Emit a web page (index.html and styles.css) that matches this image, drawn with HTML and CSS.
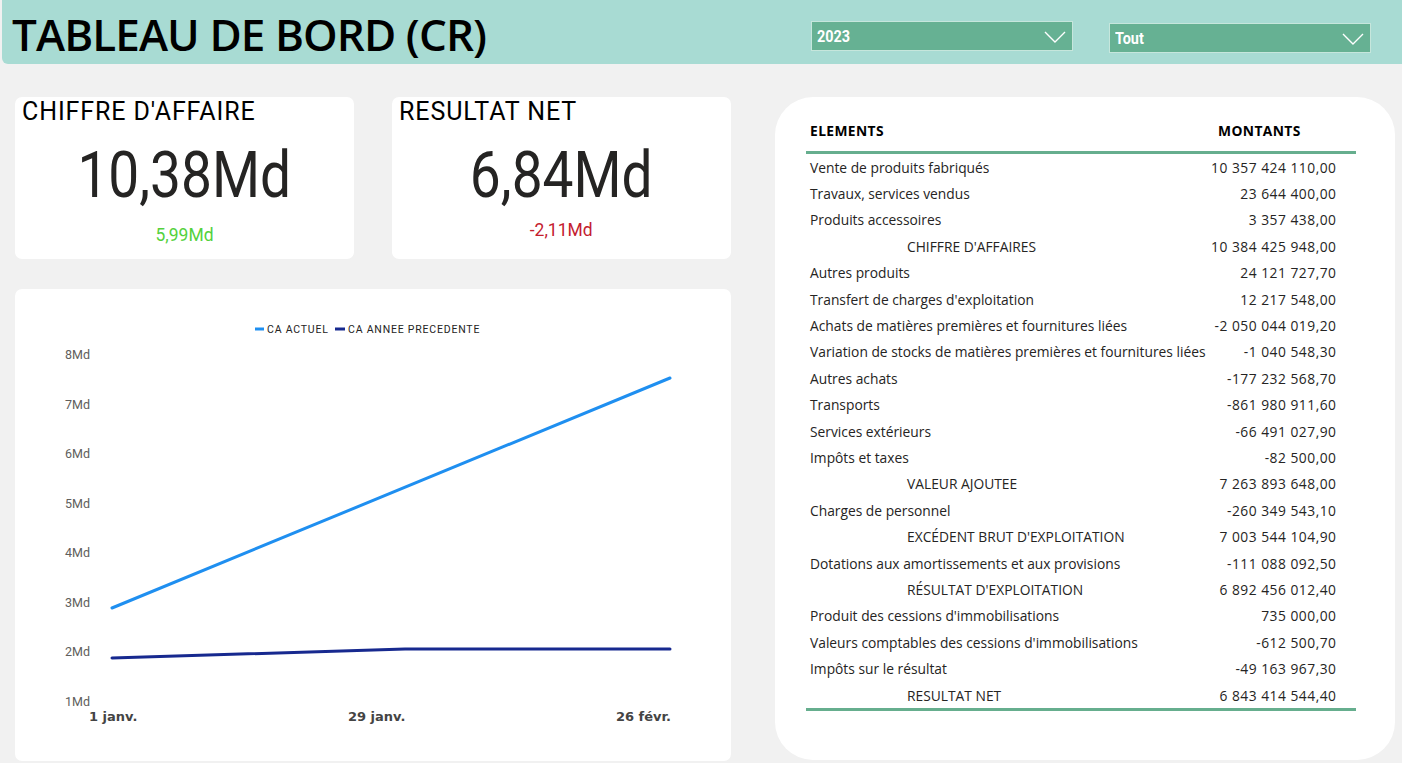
FILE: index.html
```html
<!DOCTYPE html>
<html lang="fr">
<head>
<meta charset="utf-8">
<title>Tableau de bord (CR)</title>
<link rel="stylesheet" href="styles.css">
</head>
<body>
<header class="topbar">
  <h1 class="title">TABLEAU DE BORD (CR)</h1>
  <div class="slicer slicer-year">
    <span class="slicer-label">2023</span>
    <svg class="chev" width="22" height="12" viewBox="0 0 22 12"><path d="M1 1 L11 11 L21 1" fill="none" stroke="#fff" stroke-width="1.4"/></svg>
  </div>
  <div class="slicer slicer-all">
    <span class="slicer-label">Tout</span>
    <svg class="chev" width="22" height="12" viewBox="0 0 22 12"><path d="M1 1 L11 11 L21 1" fill="none" stroke="#fff" stroke-width="1.4"/></svg>
  </div>
</header>

<main class="content">
  <section class="left">
    <div class="kpis">
      <div class="kpi">
        <div class="kpi-title">CHIFFRE D'AFFAIRE</div>
        <div class="kpi-value"><span class="num">10,38Md</span></div>
        <div class="kpi-delta up"><span class="num">5,99Md</span></div>
      </div>
      <div class="kpi">
        <div class="kpi-title">RESULTAT NET</div>
        <div class="kpi-value"><span class="num">6,84Md</span></div>
        <div class="kpi-delta down"><span class="num">-2,11Md</span></div>
      </div>
    </div>

    <div class="chart-card">
      <svg class="chart" width="716" height="472" viewBox="0 0 716 472">
        <g class="legend">
          <line x1="240" y1="40" x2="249" y2="40" stroke="#1f8ff0" stroke-width="3"/>
          <text x="252" y="44">CA ACTUEL</text>
          <line x1="320" y1="40" x2="330" y2="40" stroke="#17298f" stroke-width="3"/>
          <text x="333" y="44">CA ANNEE PRECEDENTE</text>
        </g>
        <g class="yaxis">
          <text x="50" y="70">8Md</text>
          <text x="50" y="120">7Md</text>
          <text x="50" y="169">6Md</text>
          <text x="50" y="219">5Md</text>
          <text x="50" y="268">4Md</text>
          <text x="50" y="318">3Md</text>
          <text x="50" y="367">2Md</text>
          <text x="50" y="417">1Md</text>
        </g>
        <g class="xaxis">
          <text x="74" y="432">1 janv.</text>
          <text x="333" y="432">29 janv.</text>
          <text x="656" y="432" text-anchor="end">26 févr.</text>
        </g>
        <polyline points="97,319 655,89" fill="none" stroke="#1f8ff0" stroke-width="3" stroke-linecap="round"/>
        <polyline points="97,369 390,360 655,360" fill="none" stroke="#17298f" stroke-width="3" stroke-linecap="round" stroke-linejoin="round"/>
      </svg>
    </div>
  </section>

  <section class="table-card">
    <div class="grid">
      <div class="row head"><div class="c1">ELEMENTS</div><div class="c2">MONTANTS</div></div>
      <div class="row"><div class="c1">Vente de produits fabriqués</div><div class="c2"><span>10 357 424 110,00</span></div></div>
      <div class="row"><div class="c1">Travaux, services vendus</div><div class="c2"><span>23 644 400,00</span></div></div>
      <div class="row"><div class="c1">Produits accessoires</div><div class="c2"><span>3 357 438,00</span></div></div>
      <div class="row sub"><div class="c1">CHIFFRE D'AFFAIRES</div><div class="c2"><span>10 384 425 948,00</span></div></div>
      <div class="row"><div class="c1">Autres produits</div><div class="c2"><span>24 121 727,70</span></div></div>
      <div class="row"><div class="c1">Transfert de charges d'exploitation</div><div class="c2"><span>12 217 548,00</span></div></div>
      <div class="row"><div class="c1">Achats de matières premières et fournitures liées</div><div class="c2"><span>-2 050 044 019,20</span></div></div>
      <div class="row"><div class="c1">Variation de stocks de matières premières et fournitures liées</div><div class="c2"><span>-1 040 548,30</span></div></div>
      <div class="row"><div class="c1">Autres achats</div><div class="c2"><span>-177 232 568,70</span></div></div>
      <div class="row"><div class="c1">Transports</div><div class="c2"><span>-861 980 911,60</span></div></div>
      <div class="row"><div class="c1">Services extérieurs</div><div class="c2"><span>-66 491 027,90</span></div></div>
      <div class="row"><div class="c1">Impôts et taxes</div><div class="c2"><span>-82 500,00</span></div></div>
      <div class="row sub"><div class="c1">VALEUR AJOUTEE</div><div class="c2"><span>7 263 893 648,00</span></div></div>
      <div class="row"><div class="c1">Charges de personnel</div><div class="c2"><span>-260 349 543,10</span></div></div>
      <div class="row sub"><div class="c1">EXCÉDENT BRUT D'EXPLOITATION</div><div class="c2"><span>7 003 544 104,90</span></div></div>
      <div class="row"><div class="c1">Dotations aux amortissements et aux provisions</div><div class="c2"><span>-111 088 092,50</span></div></div>
      <div class="row sub"><div class="c1">RÉSULTAT D'EXPLOITATION</div><div class="c2"><span>6 892 456 012,40</span></div></div>
      <div class="row"><div class="c1">Produit des cessions d'immobilisations</div><div class="c2"><span>735 000,00</span></div></div>
      <div class="row"><div class="c1">Valeurs comptables des cessions d'immobilisations</div><div class="c2"><span>-612 500,70</span></div></div>
      <div class="row"><div class="c1">Impôts sur le résultat</div><div class="c2"><span>-49 163 967,30</span></div></div>
      <div class="row sub last"><div class="c1">RESULTAT NET</div><div class="c2"><span>6 843 414 544,40</span></div></div>
    </div>
  </section>
</main>
</body>
</html>
```

FILE: styles.css
```css
* { box-sizing: border-box; }

html, body {
  margin: 0;
  padding: 0;
}

body {
  width: 1402px;
  height: 763px;
  overflow: hidden;
  background: #f1f1f1;
  font-family: "Open Sans", "Noto Sans", sans-serif;
  color: #252423;
}

/* ---------- top bar ---------- */
.topbar {
  margin-left: 2px;
  height: 64px;
  background: #a8dbd3;
  border-bottom-left-radius: 6px;
  display: flex;
  align-items: flex-start;
}

.title {
  margin: 5px 0 0 10px;
  font-family: "Open Sans", sans-serif;
  font-weight: 600;
  font-size: 44px;
  line-height: 58px;
  letter-spacing: -0.9px;
  color: #000;
  flex: 1;
}

.slicer {
  width: 262px;
  height: 30px;
  background: #66b193;
  border: 1px solid #c6e6dc;
  display: flex;
  align-items: center;
  justify-content: space-between;
  padding: 0 6px 0 5px;
}

.slicer-year { margin-top: 21px; }
.slicer-all { margin-top: 23px; margin-left: 36px; margin-right: 31px; }

.slicer-label {
  font-family: "Roboto", sans-serif;
  font-weight: 700;
  font-size: 16px;
  color: #fff;
  display: inline-block;
  transform: scaleX(0.9);
  transform-origin: left center;
}

.chev { display: block; margin-top: 1px; }

/* ---------- content ---------- */
.content {
  display: flex;
  align-items: flex-start;
  padding: 33px 0 0 15px;
}

.left {
  width: 716px;
  display: flex;
  flex-direction: column;
  gap: 30px;
}

.kpis {
  display: flex;
  gap: 38px;
}

.kpi {
  width: 339px;
  height: 162px;
  background: #fff;
  border-radius: 7px;
  display: flex;
  flex-direction: column;
  font-family: "Roboto", sans-serif;
}

.kpi-title {
  height: 30px;
  line-height: 30px;
  padding-left: 7px;
  font-size: 25px;
  letter-spacing: 0.9px;
  color: #000;
}

.kpi-value {
  height: 96px;
  line-height: 98px;
  text-align: center;
  font-size: 64px;
  color: #252423;
}

.num {
  display: inline-block;
  transform: scaleX(0.86);
}

.kpi-delta {
  height: 24px;
  line-height: 24px;
  text-align: center;
  font-size: 19px;
}

.kpi-delta .num { transform: scaleX(0.92); }

.kpi-delta.up { color: #54d13c; }
.kpi-delta.down { color: #c4202f; margin-top: -5px; }

.chart-card {
  width: 716px;
  height: 472px;
  background: #fff;
  border-radius: 7px;
}

.chart { display: block; }

.legend text {
  font-family: "Roboto", sans-serif;
  font-size: 10.5px;
  letter-spacing: 0.8px;
  fill: #252423;
}

.yaxis text {
  font-family: "Roboto", sans-serif;
  font-size: 12.5px;
  fill: #605e5c;
}

.xaxis text {
  font-family: "DejaVu Sans", sans-serif;
  font-weight: 700;
  font-size: 13px;
  fill: #444;
}

/* ---------- table ---------- */
.table-card {
  margin-left: 44px;
  width: 620px;
  height: 663px;
  background: #fff;
  border-radius: 38px;
  padding: 12px 0 0 31px;
}

.grid {
  width: 550px;
  font-size: 13.8px;
}

.row {
  display: grid;
  grid-template-columns: 408px 142px;
  height: 26.4px;
  align-items: center;
  white-space: nowrap;
}

.row .c1 { padding-left: 4px; }

.row .c2 {
  display: flex;
  justify-content: flex-end;
  padding-right: 20px;
  min-width: 0;
}

.row .c2 span {
  flex: none;
  letter-spacing: 0.5px;
  margin-right: -0.5px;
}

.row.head {
  height: 42px;
  border-bottom: 3px solid #66ae8e;
  font-weight: 700;
  color: #000;
  box-sizing: content-box;
}

.row.head .c1,
.row.head .c2 { letter-spacing: 0.4px; }
.row.head .c2 { justify-content: flex-start; padding-left: 4px; }

.row.sub .c1 { padding-left: 101px; }

.row.last {
  border-bottom: 3px solid #66ae8e;
  box-sizing: content-box;
}
```
